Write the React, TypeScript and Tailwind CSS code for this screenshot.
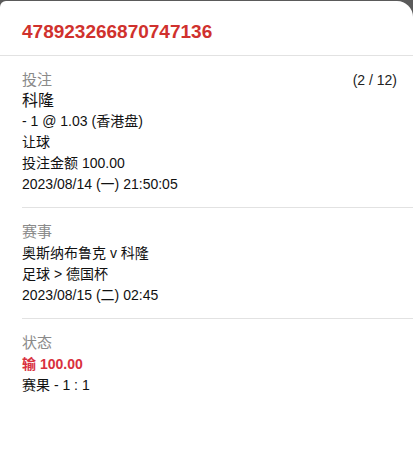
import React from 'react';

const font = { fontFamily: '"Liberation Sans", Arial, "Noto Sans CJK SC", sans-serif' };

const Section: React.FC<{ label: string; children: React.ReactNode }> = ({ label, children }) => (
  <div className="ml-[22px] border-t border-[#e2e2e2] pt-[14px] pb-[12px] pr-[16px]">
    <div className="flex items-center h-[21px]">
      <span className="text-[15px] text-[#8a8a8a]">{label}</span>
    </div>
    {children}
  </div>
);

const Line: React.FC<{ children: React.ReactNode; className?: string }> = ({ children, className = '' }) => (
  <div className={`text-[14px] leading-[21px] ${className || 'text-[#111]'}`}>{children}</div>
);

const App: React.FC = () => {
  return (
    <div className="min-h-[451px] bg-[#5a5a5a] pt-[1px]" style={font}>
      <div className="min-h-[450px] bg-white rounded-tl-[6px] rounded-tr-[16px]">
        {/* header */}
        <div className="h-[55px] border-b border-[#e2e2e2] pl-[22px] pt-[19px]">
          <div className="text-[19px] leading-[24px] font-bold text-[#d0312d]">478923266870747136</div>
        </div>

        <div className="ml-[22px] pt-[14px] pb-[12px] pr-[16px]">
          <div className="flex justify-between items-center h-[21px]">
            <span className="text-[15px] text-[#8a8a8a]">投注</span>
            <span className="text-[14px] text-[#222]">(2 / 12)</span>
          </div>
          <div className="text-[16px] leading-[20px] text-[#111]">科隆</div>
          <Line>- 1 @ 1.03 (香港盘)</Line>
          <Line>让球</Line>
          <Line>投注金额 100.00</Line>
          <Line>2023/08/14 (一) 21:50:05</Line>
        </div>

        <Section label="赛事">
          <Line>奥斯纳布鲁克 v 科隆</Line>
          <Line>足球 &gt; 德国杯</Line>
          <Line>2023/08/15 (二) 02:45</Line>
        </Section>

        <Section label="状态">
          <Line className="font-bold text-[#d9303e]">输 100.00</Line>
          <Line>赛果 - 1 : 1</Line>
        </Section>
      </div>
    </div>
  );
};

export default App;
